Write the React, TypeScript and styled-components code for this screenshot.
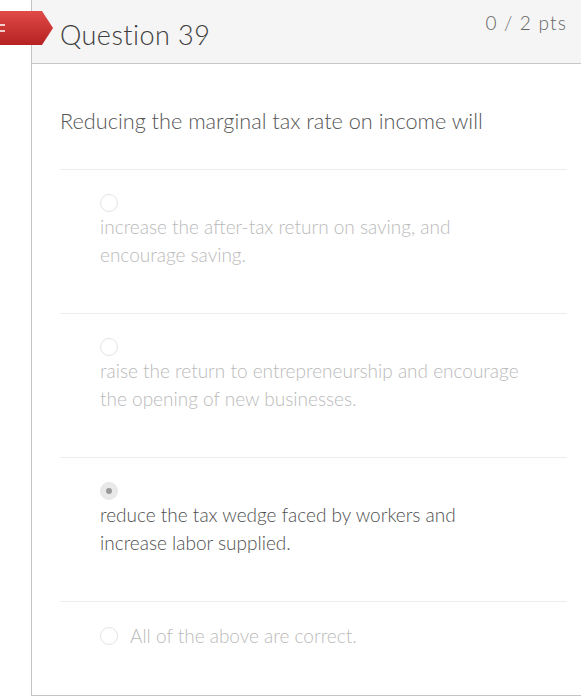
import styled, { createGlobalStyle } from "styled-components";

const Global = createGlobalStyle`
  html, body {
    margin: 0;
    padding: 0;
    background: #ffffff;
    font-family: Lato, "Open Sans", Arial, sans-serif;
    overflow: hidden;
  }
`;

const Page = styled.div`
  position: relative;
  width: 581px;
  height: 700px;
  overflow: hidden;
`;

const Card = styled.div`
  margin-left: 31px;
  width: 550px;
  border-left: 1px solid #c4c4c4;
  border-bottom: 1px solid #c4c4c4;
  box-sizing: border-box;
  height: 696px;
  display: flex;
  flex-direction: column;
`;

const Header = styled.div`
  height: 64px;
  background: #f5f5f5;
  border-bottom: 1px solid #c6c6c6;
  display: flex;
  justify-content: space-between;
  align-items: flex-start;
  padding: 0 14px 0 28px;
  box-sizing: border-box;
`;

const Title = styled.h2`
  margin: 0;
  padding-top: 19px;
  font-size: 27px;
  font-weight: 300;
  color: #3d3d3d;
  line-height: 32px;
  letter-spacing: 0.45px;
`;

const Points = styled.span`
  padding-top: 11px;
  font-size: 19px;
  font-weight: 300;
  color: #666666;
  line-height: 24px;
  letter-spacing: 1.2px;
`;

const Body = styled.div`
  padding: 43px 14px 0 28px;
`;

const Prompt = styled.p`
  margin: 0 0 34px;
  font-size: 21.7px;
  font-weight: 300;
  line-height: 28px;
  color: #555555;
`;

const Option = styled.div<{ inline?: boolean }>`
  border-top: 1px solid #ececec;
  padding: ${(p) => (p.inline ? "20px 0 0 40px" : "24px 0 44px 40px")};
  display: flex;
  flex-direction: ${(p) => (p.inline ? "row" : "column")};
  align-items: ${(p) => (p.inline ? "center" : "flex-start")};
  gap: ${(p) => (p.inline ? "12px" : "1px")};
`;

const Radio = styled.span<{ checked?: boolean }>`
  width: 18px;
  height: 18px;
  border-radius: 50%;
  box-sizing: border-box;
  border: 1.5px solid ${(p) => (p.checked ? "#e6e6e6" : "#e4e4e4")};
  background: ${(p) => (p.checked ? "#e9e9e9" : "#ffffff")};
  display: flex;
  align-items: center;
  justify-content: center;
  flex-shrink: 0;
  &::after {
    content: "";
    width: 6px;
    height: 6px;
    border-radius: 50%;
    background: ${(p) => (p.checked ? "#9a9a9a" : "transparent")};
  }
`;

const Answer = styled.div<{ chosen?: boolean }>`
  max-width: 422px;
  font-size: 19px;
  font-weight: 300;
  line-height: 28px;
  color: ${(p) => (p.chosen ? "#4f4f4f" : "#bababa")};
`;

const Flag = styled.svg`
  position: absolute;
  left: 0;
  top: 10px;
`;

function Incorrect() {
  return (
    <Flag width="56" height="36" viewBox="0 0 56 36">
      <defs>
        <linearGradient id="red" x1="0" y1="0" x2="0" y2="1">
          <stop offset="0" stopColor="#e04a47" />
          <stop offset="1" stopColor="#b52222" />
        </linearGradient>
      </defs>
      <polygon points="0,1 42,1 53,18 42,35 0,35" fill="url(#red)" />
      <path d="M-1 15 H5 M-1 21 H5" stroke="#ffffff" strokeWidth="1.5" />
    </Flag>
  );
}

export default function App() {
  return (
    <Page>
      <Global />
      <Card>
        <Header>
          <Title>Question 39</Title>
          <Points>0 / 2 pts</Points>
        </Header>
        <Body>
          <Prompt>Reducing the marginal tax rate on income will</Prompt>
          <Option>
            <Radio />
            <Answer>increase the after-tax return on saving, and encourage saving.</Answer>
          </Option>
          <Option>
            <Radio />
            <Answer>raise the return to entrepreneurship and encourage the opening of new businesses.</Answer>
          </Option>
          <Option>
            <Radio checked />
            <Answer chosen>reduce the tax wedge faced by workers and increase labor supplied.</Answer>
          </Option>
          <Option inline>
            <Radio />
            <Answer>All of the above are correct.</Answer>
          </Option>
        </Body>
      </Card>
      <Incorrect />
    </Page>
  );
}
